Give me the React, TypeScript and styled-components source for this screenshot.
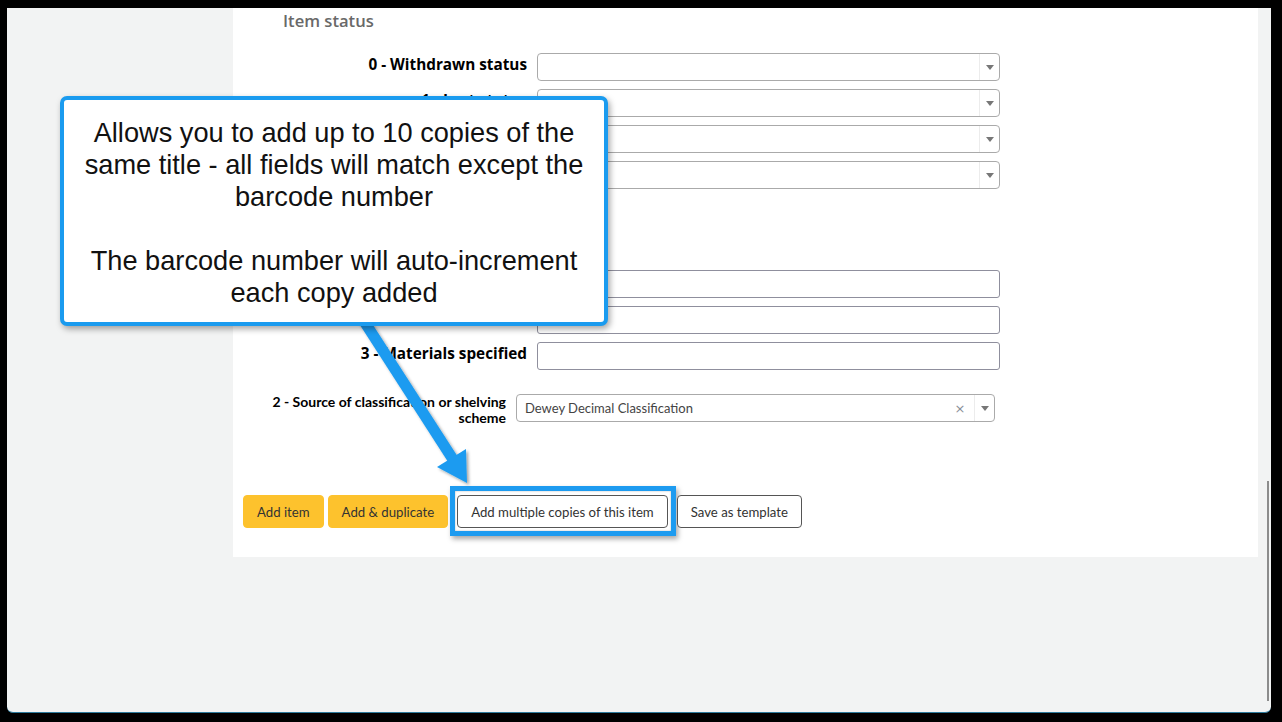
import styled, { createGlobalStyle } from 'styled-components';

const GlobalStyle = createGlobalStyle`
  html, body {
    margin: 0;
    padding: 0;
    background: #000;
  }
  * {
    box-sizing: border-box;
  }
`;

const Frame = styled.div`
  position: relative;
  width: 1282px;
  height: 722px;
  background: #000;
  padding: 8px 11px 9px 7px;
  font-family: Lato, "Open Sans", sans-serif;
`;

const Window = styled.div`
  position: relative;
  height: 100%;
  background: #f2f3f3;
  padding-left: 226px;
  border-bottom: 1px solid #2c7a9c;
  border-radius: 0 0 6px 6px;
  overflow: hidden;
`;

const Scrollbar = styled.div`
  position: absolute;
  right: 2px;
  top: 473px;
  width: 2px;
  height: 220px;
  background: #8c8c8c;
`;

const Panel = styled.div`
  width: 1025px;
  background: #fff;
  padding-bottom: 29px;
`;

const Legend = styled.h3<{ $top?: number }>`
  margin: ${(p) => p.$top ?? 0}px 0 0 50px;
  font-family: "Open Sans", sans-serif;
  font-size: 16.6px;
  font-weight: 600;
  line-height: 26px;
  color: #696969;
`;

const Fields = styled.div<{ $top: number }>`
  display: flex;
  flex-direction: column;
  gap: 8px;
  margin-top: ${(p) => p.$top}px;
`;

const Row = styled.div<{ $label: number }>`
  display: grid;
  grid-template-columns: ${(p) => p.$label}px auto;
  column-gap: 10px;
  align-items: start;
`;

const Label = styled.label`
  text-align: right;
  font-family: "Open Sans", sans-serif;
  font-weight: 700;
  color: #000;
  font-size: 15.3px;
  line-height: 22px;
  white-space: nowrap;
`;

const SmallLabel = styled.label`
  text-align: right;
  font-family: Lato, sans-serif;
  font-weight: 700;
  color: #000;
  font-size: 14px;
  line-height: 16px;
  white-space: nowrap;
`;

const TextInput = styled.div`
  width: 463px;
  height: 28px;
  border: 1px solid #8f8f9d;
  border-radius: 3px;
  background: #fff;
`;

const Select = styled.div<{ $width: number }>`
  display: flex;
  align-items: center;
  width: ${(p) => p.$width}px;
  height: 28px;
  border: 1px solid #aaa;
  border-radius: 4px;
  background: #fff;
`;

const SelectValue = styled.span`
  flex: 1;
  padding-left: 8px;
  font-size: 13px;
  color: #444;
`;

const Clear = styled.span`
  width: 12px;
  margin-right: 8px;
  font-family: "DejaVu Sans", sans-serif;
  font-size: 13px;
  color: #8a8f9a;
  text-align: center;
`;

const Caret = styled.span`
  display: flex;
  align-items: center;
  justify-content: center;
  width: 20px;
  height: 100%;
  border-left: 1px solid #ececec;
  &::after {
    content: '';
    border-top: 5px solid #777;
    border-left: 4px solid transparent;
    border-right: 4px solid transparent;
  }
`;

const Actions = styled.div`
  display: flex;
  gap: 4px;
  margin: 69px 0 0 10px;
`;

const Button = styled.button<{ $primary?: boolean; $space?: number }>`
  position: relative;
  height: 33px;
  padding: 0 13px;
  margin: 0 ${(p) => p.$space ?? 0}px;
  font-family: Lato, "Open Sans", sans-serif;
  font-size: 13.2px;
  color: #333;
  border-radius: 4px;
  border: 1px solid ${(p) => (p.$primary ? '#fdc22d' : '#555')};
  background: ${(p) => (p.$primary ? '#fdc22d' : '#fff')};
`;

const Highlight = styled.span`
  position: absolute;
  left: -8px;
  right: -9px;
  top: -10px;
  bottom: -9px;
  border: 5px solid #1d9bf0;
  box-shadow: 2px 3px 5px rgba(0, 0, 0, 0.35), inset 0 0 2px rgba(0, 0, 0, 0.3);
  pointer-events: none;
`;

const Callout = styled.div`
  position: absolute;
  left: 60px;
  top: 96px;
  width: 548px;
  height: 230px;
  padding-top: 17px;
  background: #fff;
  border: 4px solid #1a9bef;
  border-radius: 7px;
  box-shadow: 2px 3px 6px rgba(0, 0, 0, 0.35);
  font-family: "Liberation Sans", Arial, sans-serif;
  font-size: 27.2px;
  line-height: 32px;
  color: #111;
  text-align: center;
  white-space: nowrap;
`;

const Overlay = styled.svg`
  position: absolute;
  left: 0;
  top: 0;
  pointer-events: none;
`;

const Pointer = () => (
  <Overlay width={1282} height={722}>
    <defs>
      <filter id="sh" x="-20%" y="-20%" width="140%" height="140%">
        <feDropShadow dx="2" dy="2" stdDeviation="1.5" floodOpacity="0.35" />
      </filter>
    </defs>
    <g filter="url(#sh)" fill="#1d9bf0">
      <line x1="362" y1="318" x2="454" y2="461" stroke="#1d9bf0" strokeWidth={11} />
      <polygon points="467,483 437,467 466,449" />
    </g>
  </Overlay>
);

const Dropdown = ({ width, value, clearable }: { width: number; value?: string; clearable?: boolean }) => (
  <Select $width={width}>
    <SelectValue>{value}</SelectValue>
    {clearable && <Clear>×</Clear>}
    <Caret />
  </Select>
);

export default function App() {
  return (
    <>
      <GlobalStyle />
      <Frame>
        <Window>
          <Panel>
            <Legend>Item status</Legend>
            <Fields $top={19}>
              <Row $label={294}>
                <Label>0 - Withdrawn status</Label>
                <Dropdown width={463} />
              </Row>
              <Row $label={294}>
                <Label>1 - Lost status</Label>
                <Dropdown width={463} />
              </Row>
              <Row $label={294}>
                <Label>4 - Damaged status</Label>
                <Dropdown width={463} />
              </Row>
              <Row $label={294}>
                <Label>7 - Not for loan</Label>
                <Dropdown width={463} />
              </Row>
            </Fields>
            <Legend $top={37}>Notes</Legend>
            <Fields $top={18}>
              <Row $label={294}>
                <Label>x - Non-public note</Label>
                <TextInput />
              </Row>
              <Row $label={294}>
                <Label>z - Public note</Label>
                <TextInput />
              </Row>
              <Row $label={294}>
                <Label>3 - Materials specified</Label>
                <TextInput />
              </Row>
            </Fields>
            <Fields $top={24}>
              <Row $label={273}>
                <SmallLabel>
                  2 - Source of classification or shelving
                  <br />
                  scheme
                </SmallLabel>
                <Dropdown width={479} value="Dewey Decimal Classification" clearable />
              </Row>
            </Fields>
            <Actions>
              <Button $primary>Add item</Button>
              <Button $primary>Add &amp; duplicate</Button>
              <Button $space={5}>
                Add multiple copies of this item
                <Highlight />
              </Button>
              <Button>Save as template</Button>
            </Actions>
          </Panel>
          <Scrollbar />
        </Window>
        <Pointer />
        <Callout>
          Allows you to add up to 10 copies of the
          <br />
          same title - all fields will match except the
          <br />
          barcode number
          <br />
          <br />
          The barcode number will auto-increment
          <br />
          each copy added
        </Callout>
      </Frame>
    </>
  );
}
